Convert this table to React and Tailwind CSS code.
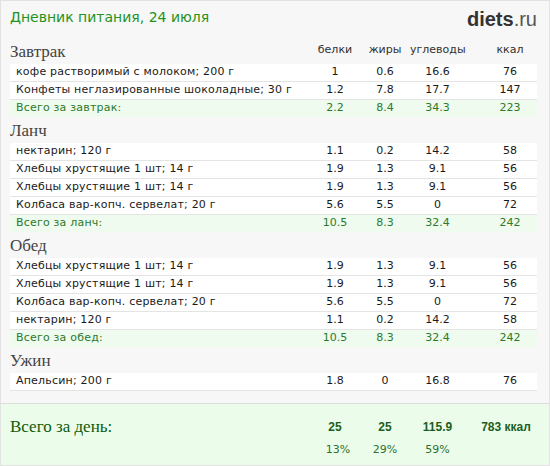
import React from "react";

const sans = { fontFamily: "'DejaVu Sans', Verdana, sans-serif" };
const serif = { fontFamily: "'Liberation Serif', 'Times New Roman', serif" };
const arial = { fontFamily: "'Liberation Sans', Arial, sans-serif" };

const meals = [
  {
    title: "Завтрак",
    items: [
      ["кофе растворимый с молоком; 200 г", "1", "0.6", "16.6", "76"],
      ["Конфеты неглазированные шоколадные; 30 г", "1.2", "7.8", "17.7", "147"],
    ],
    total: ["Всего за завтрак:", "2.2", "8.4", "34.3", "223"],
  },
  {
    title: "Ланч",
    items: [
      ["нектарин; 120 г", "1.1", "0.2", "14.2", "58"],
      ["Хлебцы хрустящие 1 шт; 14 г", "1.9", "1.3", "9.1", "56"],
      ["Хлебцы хрустящие 1 шт; 14 г", "1.9", "1.3", "9.1", "56"],
      ["Колбаса вар-копч. сервелат; 20 г", "5.6", "5.5", "0", "72"],
    ],
    total: ["Всего за ланч:", "10.5", "8.3", "32.4", "242"],
  },
  {
    title: "Обед",
    items: [
      ["Хлебцы хрустящие 1 шт; 14 г", "1.9", "1.3", "9.1", "56"],
      ["Хлебцы хрустящие 1 шт; 14 г", "1.9", "1.3", "9.1", "56"],
      ["Колбаса вар-копч. сервелат; 20 г", "5.6", "5.5", "0", "72"],
      ["нектарин; 120 г", "1.1", "0.2", "14.2", "58"],
    ],
    total: ["Всего за обед:", "10.5", "8.3", "32.4", "242"],
  },
  {
    title: "Ужин",
    items: [["Апельсин; 200 г", "1.8", "0", "16.8", "76"]],
  },
];

const cols = "grid grid-cols-[300px_50px_50px_55px_72px]";

function Row({ cells, total }) {
  return (
    <div
      className={`${cols} items-center text-[11px] ${
        total
          ? "h-[17px] bg-[#effbef] text-[#2a7a2a]"
          : "h-[18px] bg-white text-[#1a1a1a] border-b border-[#e4e4e4]"
      }`}
    >
      <div className="pl-[6px] whitespace-nowrap tracking-[0.2px]">{cells[0]}</div>
      <div className="text-center">{cells[1]}</div>
      <div className="text-center">{cells[2]}</div>
      <div className="text-center">{cells[3]}</div>
      <div className="text-center pl-[18px]">{cells[4]}</div>
    </div>
  );
}

export default function App() {
  return (
    <div
      className="w-[550px] h-[466px] border border-[#e2e2e2] bg-[#f7f7f7] flex flex-col overflow-hidden"
      style={sans}
    >
      <div className="pl-[9px] pr-[12px]">
        {/* header */}
        <div className="h-[37px] flex items-start justify-between pt-[6px]">
          <div className="text-[14px] text-[#239323] leading-[20px]">
            Дневник питания, 24 июля
          </div>
          <div className="text-[20px] leading-[22px] text-[#333] pt-[1px]" style={arial}>
            <span className="font-bold">diets</span>
            <span className="text-[#555]">.ru</span>
          </div>
        </div>

        {meals.map((m, i) => (
          <div key={m.title}>
            <div className={`${cols} h-[26px] items-end pb-[3px]`}>
              <div className="text-[17px] leading-[18px] text-[#444]" style={serif}>
                {m.title}
              </div>
              {i === 0 && (
                <>
                  <div className="text-center text-[11px] text-[#333] pb-[3px]">белки</div>
                  <div className="text-center text-[11px] text-[#333] pb-[3px]">жиры</div>
                  <div className="text-center text-[11px] text-[#333] pb-[3px]">углеводы</div>
                  <div className="text-center text-[11px] text-[#333] pb-[3px] pl-[18px]">ккал</div>
                </>
              )}
            </div>
            {m.items.map((r, j) => (
              <Row key={j} cells={r} />
            ))}
            {m.total && <Row cells={m.total} total />}
          </div>
        ))}
      </div>

      {/* day total */}
      <div className="mt-auto h-[62px] border-t border-[#dcdcdc] bg-[#ebfdea] pl-[9px] pr-[12px] pt-[13px]">
        <div className={`${cols} items-center`}>
          <div className="text-[17px] leading-[20px] text-[#0d5a0d]" style={serif}>
            Всего за день:
          </div>
          {["25", "25", "115.9"].map((v, k) => (
            <div key={k} className="text-center font-bold text-[12px] text-[#1d5e1d]" style={arial}>
              {v}
            </div>
          ))}
          <div className="text-center font-bold text-[12px] text-[#1d5e1d] pl-[10px]" style={arial}>
            783 ккал
          </div>
        </div>
        <div className={`${cols} items-center mt-[5px] text-[11px] text-[#2f6f2f]`}>
          <div />
          <div className="text-center pl-[6px]">13%</div>
          <div className="text-center">29%</div>
          <div className="text-center">59%</div>
          <div />
        </div>
      </div>
    </div>
  );
}
